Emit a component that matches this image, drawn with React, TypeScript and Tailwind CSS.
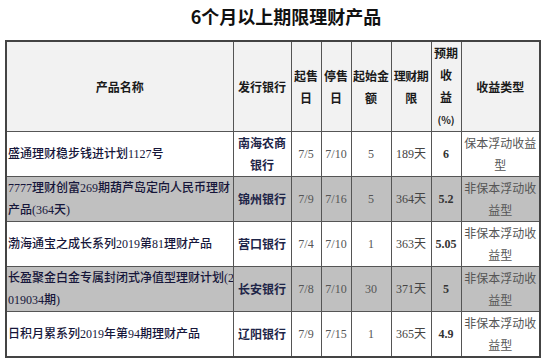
import React from 'react';

interface Product {
  name: React.ReactNode;
  bank: React.ReactNode;
  start: string;
  end: string;
  min: string;
  term: string;
  rate: string;
  type: React.ReactNode;
  shaded?: boolean;
}

const products: Product[] = [
  {
    name: '盛通理财稳步钱进计划1127号',
    bank: <>南海农商<br />银行</>,
    start: '7/5',
    end: '7/10',
    min: '5',
    term: '189天',
    rate: '6',
    type: <>保本浮动收益<br />型</>,
  },
  {
    name: <>7777理财创富269期葫芦岛定向人民币理财<br />产品(364天)</>,
    bank: '锦州银行',
    start: '7/9',
    end: '7/16',
    min: '5',
    term: '364天',
    rate: '5.2',
    type: <>非保本浮动收<br />益型</>,
    shaded: true,
  },
  {
    name: '渤海通宝之成长系列2019第81理财产品',
    bank: '营口银行',
    start: '7/4',
    end: '7/10',
    min: '1',
    term: '363天',
    rate: '5.05',
    type: <>非保本浮动收<br />益型</>,
  },
  {
    name: <>长盈聚金白金专属封闭式净值型理财计划(2<br />019034期)</>,
    bank: '长安银行',
    start: '7/8',
    end: '7/10',
    min: '30',
    term: '371天',
    rate: '5',
    type: <>非保本浮动收<br />益型</>,
    shaded: true,
  },
  {
    name: '日积月累系列2019年第94期理财产品',
    bank: '辽阳银行',
    start: '7/9',
    end: '7/15',
    min: '1',
    term: '365天',
    rate: '4.9',
    type: <>非保本浮动收<br />益型</>,
  },
];

const th = 'border border-[#555] p-0 text-center align-middle font-bold text-[#1a1a1a]';
const td = 'border border-[#555] p-0 h-[44px] align-middle';

export default function App() {
  return (
    <div className="w-[545px] h-[360px] bg-white overflow-hidden" style={{ fontFamily: '"Liberation Serif", "Noto Sans CJK SC", serif' }}>
      {/* Title */}
      <div
        className="h-[32px] mb-[8px] flex items-center justify-center pl-[27px] text-[18px] font-bold text-[#111]"
        style={{ fontFamily: '"Noto Sans CJK SC", sans-serif' }}
      >
        6个月以上期限理财产品
      </div>

      <table className="ml-[5px] w-[534px] table-fixed border-collapse border-2 border-[#444] text-[12px] leading-[22px]">
        <colgroup>
          <col className="w-[227px]" />
          <col className="w-[58px]" />
          <col className="w-[30px]" />
          <col className="w-[30px]" />
          <col className="w-[40px]" />
          <col className="w-[40px]" />
          <col className="w-[30px]" />
          <col className="w-[79px]" />
        </colgroup>
        <thead>
          <tr className="bg-[#f2f2f2] h-[88px]" style={{ fontFamily: '"Noto Sans CJK SC", sans-serif' }}>
            <th className={th}>产品名称</th>
            <th className={th}>发行银行</th>
            <th className={th}>起售<br />日</th>
            <th className={th}>停售<br />日</th>
            <th className={th}>起始金<br />额</th>
            <th className={th + ' whitespace-nowrap tracking-[-0.5px]'}>理财期<br />限</th>
            <th className={th}>
              预期<br />收<br />益<br /><span className="text-[10px]">(%)</span>
            </th>
            <th className={th}>收益类型</th>
          </tr>
        </thead>
        <tbody>
          {products.map((p, i) => (
            <tr key={i} className={p.shaded ? 'bg-[#c0c0c0]' : 'bg-white'}>
              <td className={td + ' pl-px text-left font-medium text-[#16163a] whitespace-nowrap overflow-hidden'}>{p.name}</td>
              <td className={td + ' text-center font-bold text-[#1e2548]'} style={{ fontFamily: '"Noto Sans CJK SC", sans-serif' }}>{p.bank}</td>
              <td className={td + ' text-center text-[#555]'}>{p.start}</td>
              <td className={td + ' text-center text-[#555]'}>{p.end}</td>
              <td className={td + ' text-center text-[#555]'}>{p.min}</td>
              <td className={td + ' text-center text-[#444]'}>{p.term}</td>
              <td className={td + ' text-center font-bold text-[#333]'}>{p.rate}</td>
              <td className={td + ' text-center text-[#555]'} style={{ fontFamily: '"Noto Sans CJK SC", sans-serif' }}>{p.type}</td>
            </tr>
          ))}
        </tbody>
      </table>
    </div>
  );
}
